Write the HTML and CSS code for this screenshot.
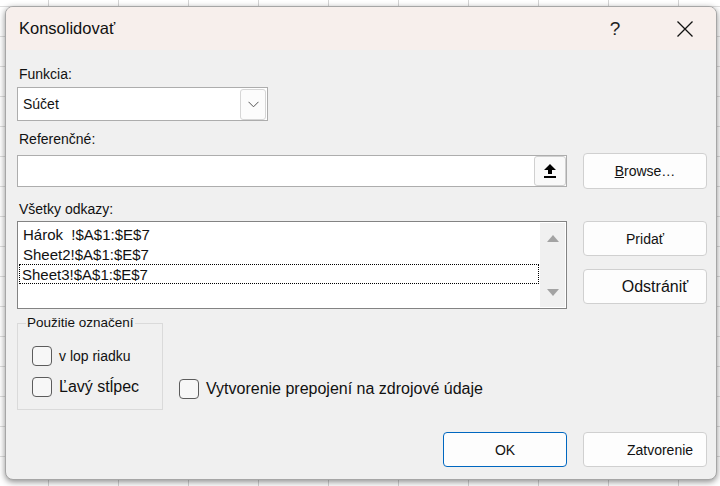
FILE: index.html
```html
<!DOCTYPE html>
<html lang="sk">
<head>
  <meta charset="UTF-8">
  <title>Konsolidovať</title>
  <link rel="stylesheet" href="styles.css">
</head>
<body>
  <div class="dialog">
    <div class="titlebar">
      <span class="title">Konsolidovať</span>
      <span class="help">?</span>
      <span class="close">
        <svg width="18" height="18" viewBox="0 0 18 18"><path d="M1.5 1.5 L16.5 16.5 M16.5 1.5 L1.5 16.5" stroke="#111" stroke-width="1.3" fill="none"/></svg>
      </span>
    </div>

    <div class="content">
      <div class="label lbl-func">Funkcia:</div>
      <div class="select">
        <span class="select-value">Súčet</span>
        <span class="drop-btn">
          <svg width="11" height="7" viewBox="0 0 11 7"><path d="M0.5 0.8 L5.5 5.8 L10.5 0.8" stroke="#555" stroke-width="1" fill="none"/></svg>
        </span>
      </div>

      <div class="label lbl-ref">Referenčné:</div>
      <div class="row ref-row">
        <div class="ref-input">
          <span class="collapse-btn">
            <svg width="12" height="14" viewBox="0 0 12 14"><path d="M6 0 L12 6 L8 6 L8 10 L4 10 L4 6 L0 6 Z" fill="#000"/><rect x="0" y="12" width="12" height="2" fill="#000"/></svg>
          </span>
        </div>
        <button class="btn"><u>B</u>rowse…</button>
      </div>

      <div class="label lbl-all">Všetky odkazy:</div>
      <div class="row list-row">
        <div class="listbox">
          <div class="items">
            <div class="item">Hárok  !$A$1:$E$7</div>
            <div class="item">Sheet2!$A$1:$E$7</div>
            <div class="item focused">Sheet3!$A$1:$E$7</div>
          </div>
          <div class="scrollbar">
            <span class="arrow-up"></span>
            <span class="arrow-down"></span>
          </div>
        </div>
        <div class="side-buttons">
          <button class="btn">Pridať</button>
          <button class="btn btn-remove">Odstrániť</button>
        </div>
      </div>

      <div class="row group-row">
        <fieldset class="group">
          <legend>Použitie označení</legend>
          <label class="check small"><span class="box"></span>v lop riadku</label>
          <label class="check"><span class="box"></span>Ľavý stĺpec</label>
        </fieldset>
        <label class="check link-check"><span class="box"></span>Vytvorenie prepojení na zdrojové údaje</label>
      </div>

      <div class="row footer">
        <button class="btn btn-default">OK</button>
        <button class="btn btn-close">Zatvorenie</button>
      </div>
    </div>
  </div>
</body>
</html>
```

FILE: styles.css
```css
body {
  margin: 0;
  width: 720px;
  height: 486px;
  overflow: hidden;
  font-family: "Liberation Sans", Arial, sans-serif;
  color: #111;
  background-color: #fff;
  background-image:
    repeating-linear-gradient(90deg, transparent 0 48px, #d4d4d4 48px 49px, transparent 49px 70px),
    repeating-linear-gradient(0deg, transparent 0 29px, #dedede 29px 30px);
}

.dialog {
  margin: 6px 0 0 5px;
  width: 710px;
  height: 472px;
  background-color: #f0f0f0;
  border: 1px solid #a6a6a6;
  border-radius: 8px;
  box-shadow: 0 2px 6px rgba(0, 0, 0, 0.45);
  overflow: hidden;
}

.titlebar {
  display: flex;
  align-items: center;
  height: 43px;
  padding: 0 8px 0 13px;
  background-color: #f7efec;
}

.title {
  flex: 1;
  font-size: 16.5px;
  padding-bottom: 1px;
}

.help {
  width: 46px;
  text-align: center;
  font-size: 19px;
  color: #222;
}

.close {
  width: 46px;
  margin-left: 24px;
  display: flex;
  justify-content: center;
}

.content {
  padding: 0 9px 0 11px;
  display: flex;
  flex-direction: column;
}

.row {
  display: flex;
}

.label {
  font-size: 14px;
  line-height: 18px;
  padding-left: 2px;
}

.lbl-func { margin-top: 15px; }
.lbl-ref { margin-top: 9px; }
.lbl-all { margin-top: 11px; }

.select {
  margin-top: 4px;
  width: 249px;
  height: 32px;
  background-color: #fff;
  border: 1px solid #adadad;
  display: flex;
  align-items: center;
  justify-content: space-between;
}

.select-value {
  font-size: 14px;
  padding-left: 5px;
}

.drop-btn {
  width: 24px;
  height: 29px;
  margin-right: 1px;
  border: 1px solid #d6d6d6;
  border-radius: 3px;
  background-color: #fcfcfc;
  display: flex;
  align-items: center;
  justify-content: center;
}

.ref-row {
  margin-top: 5px;
  align-items: center;
  gap: 16px;
}

.ref-input {
  flex: 1;
  height: 30px;
  background-color: #fff;
  border: 1px solid #adadad;
  display: flex;
  justify-content: flex-end;
  align-items: center;
}

.collapse-btn {
  width: 30px;
  height: 28px;
  border: 1px solid #d0d0d0;
  border-radius: 3px;
  background-color: #f9f9f9;
  display: flex;
  align-items: center;
  justify-content: center;
}

.btn {
  width: 124px;
  height: 35px;
  padding: 0;
  font-family: "Liberation Sans", Arial, sans-serif;
  font-size: 14px;
  color: #111;
  background-color: #fdfdfd;
  border: 1px solid #d0d0d0;
  border-radius: 4px;
}

.ref-row .btn {
  height: 36px;
}

.list-row {
  margin-top: 3px;
  gap: 16px;
  align-items: flex-start;
}

.listbox {
  flex: 1;
  height: 86px;
  background-color: #fff;
  border: 1px solid #838383;
  display: flex;
}

.items {
  flex: 1;
  padding: 2px 0 0 1px;
}

.item {
  height: 20px;
  line-height: 19px;
  font-size: 15px;
  padding-left: 3px;
  white-space: pre;
  border: 1px solid transparent;
  box-sizing: border-box;
  margin-right: 1px;
}

.item.focused {
  border: 1px dotted #000;
  padding-left: 2px;
}

.scrollbar {
  width: 25px;
  margin: 1px 1px 1px 0;
  background-color: #f0f0f0;
  display: flex;
  flex-direction: column;
  justify-content: space-between;
  align-items: center;
  padding: 12px 0 11px;
}

.arrow-up {
  width: 0;
  height: 0;
  border-left: 6px solid transparent;
  border-right: 6px solid transparent;
  border-bottom: 7px solid #a3a3a3;
}

.arrow-down {
  width: 0;
  height: 0;
  border-left: 6px solid transparent;
  border-right: 6px solid transparent;
  border-top: 7px solid #a3a3a3;
}

.side-buttons {
  display: flex;
  flex-direction: column;
  gap: 13px;
}

.btn-remove {
  font-size: 16px;
  padding-left: 20px;
}

.group-row {
  margin-top: 6px;
  align-items: flex-end;
  gap: 16px;
}

.group {
  margin: 0;
  width: 146px;
  height: 95px;
  box-sizing: border-box;
  border: 1px solid #dadada;
  padding: 15px 0 10px 14px;
  display: flex;
  flex-direction: column;
  gap: 11px;
}

.group legend {
  font-size: 13.5px;
  padding: 0 1px;
  margin-left: -6px;
  line-height: 16px;
}

.check {
  display: flex;
  align-items: center;
  gap: 7px;
  font-size: 16px;
  height: 20px;
}

.check.small {
  font-size: 14px;
}

.box {
  width: 18px;
  height: 18px;
  border: 1px solid #5c5c5c;
  border-radius: 4px;
  background-color: #f7f7f7;
}

.link-check {
  margin-bottom: 11px;
}

.footer {
  margin-top: 22px;
  justify-content: flex-end;
  gap: 16px;
}

.btn-default {
  border-color: #0067c0;
}

.btn-close {
  padding-left: 30px;
}
```
